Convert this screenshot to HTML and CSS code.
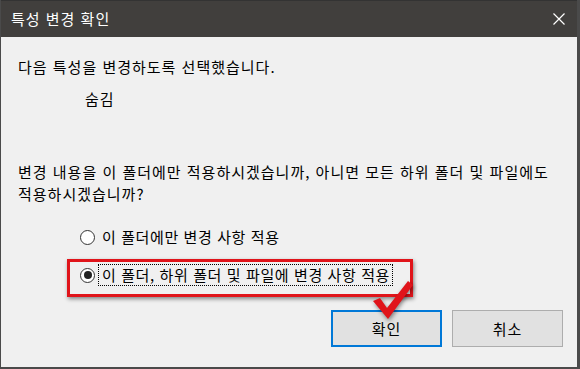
FILE: index.html
```html
<!DOCTYPE html>
<html lang="ko">
<head>
  <meta charset="UTF-8" />
  <title>특성 변경 확인</title>
  <link rel="stylesheet" href="styles.css">
</head>
<body>

  <div class="dialog">
    <div class="titlebar">
      <span class="title">특성 변경 확인</span>
      <svg class="close" width="12" height="12" viewBox="0 0 12 12">
        <path d="M0.5 0.5 L11.5 11.5 M11.5 0.5 L0.5 11.5" stroke="#fff" stroke-width="1.2" fill="none"/>
      </svg>
    </div>

    <div class="content">
      <p class="line">다음 특성을 변경하도록 선택했습니다.</p>
      <p class="line attr">숨김</p>

      <p class="question">변경 내용을 이 폴더에만 적용하시겠습니까, 아니면 모든 하위 폴더 및 파일에도<br>적용하시겠습니까?</p>

      <!-- choix -->
      <div class="options">
        <div class="option">
          <span class="radio"></span>
          <span class="label">이 폴더에만 변경 사항 적용</span>
        </div>
        <div class="option selected">
          <span class="radio checked"></span>
          <span class="label focus">이 폴더, 하위 폴더 및 파일에 변경 사항 적용</span>
        </div>
      </div>

      <div class="buttons">
        <button class="btn default">확인</button>
        <button class="btn">취소</button>
      </div>
    </div>

    <svg class="check" width="48" height="44" viewBox="0 0 48 44">
      <polygon points="3,21 10,18 17,28 38,1 43,5 18,39" fill="#e0141a"/>
    </svg>
  </div>

</body>
</html>
```

FILE: styles.css
```css
* {
  box-sizing: border-box;
}

body {
  margin: 0;
  font-family: "Noto Sans CJK KR", "Noto Sans", sans-serif;
  font-size: 15px;
  letter-spacing: 1px;
  color: #000;
  background: #f0f0f0;
}

.dialog {
  position: relative;
  width: 580px;
  height: 369px;
  background: #f0f0f0;
  border-left: 1px solid #4a4a4a;
  border-right: 3px solid #4a4a4a;
  border-bottom: 2px solid #4a4a4a;
}

.titlebar {
  height: 37px;
  background: #413f3d;
  border-top: 1px solid #333;
  display: flex;
  align-items: center;
  justify-content: space-between;
  padding: 0 12px 0 10px;
  color: #fff;
}

.title {
  line-height: 20px;
  margin-top: -1px;
}

.content {
  padding: 19px 0 0 17px;
}

p {
  margin: 0;
}

.line {
  line-height: 21px;
}

.attr {
  margin-top: 11px;
  padding-left: 67px;
}

.question {
  margin-top: 52px;
  line-height: 22px;
  white-space: nowrap;
}

.options {
  margin-top: 21px;
  padding-left: 62px;
  display: flex;
  flex-direction: column;
  gap: 16px;
}

.option {
  display: flex;
  align-items: center;
  gap: 3px;
  height: 22px;
  position: relative;
}

.selected::before {
  content: "";
  position: absolute;
  left: -13px;
  top: -5px;
  width: 340px;
  height: 32px;
  border: 3px solid #e0141a;
  box-shadow: 1px 2px 4px rgba(0, 0, 0, 0.45);
}

.radio {
  width: 15px;
  height: 15px;
  border: 1px solid #333;
  border-radius: 50%;
  background: #fff;
  display: flex;
  align-items: center;
  justify-content: center;
}

.checked::after {
  content: "";
  width: 8px;
  height: 8px;
  border-radius: 50%;
  background: #222;
}

.label {
  line-height: 20px;
  letter-spacing: 0.6px;
  padding: 0 2px 0 3px;
  border: 1px solid transparent;
}

.focus {
  border: 1px dotted #000;
}

.buttons {
  display: flex;
  justify-content: flex-end;
  gap: 10px;
  margin-top: 24px;
  padding-right: 14px;
}

.btn {
  width: 111px;
  height: 37px;
  font-family: inherit;
  font-size: 15px;
  letter-spacing: 1px;
  background: #e1e1e1;
  border: 1px solid #adadad;
  color: #000;
  padding: 0;
}

.default {
  border: 2px solid #0078d7;
}

.check {
  position: absolute;
  left: 369px;
  top: 280px;
  filter: drop-shadow(1px 2px 2px rgba(0, 0, 0, 0.45));
}
```
